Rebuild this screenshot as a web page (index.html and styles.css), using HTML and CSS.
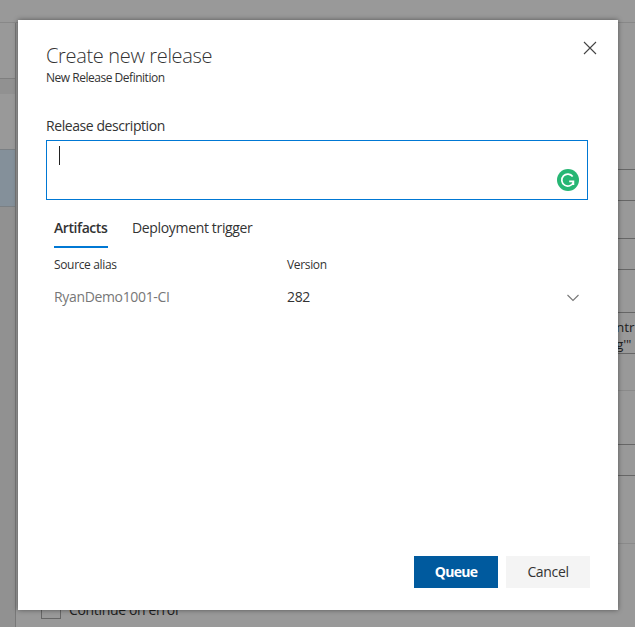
FILE: index.html
```
<!DOCTYPE html>
<html lang="en">
<head>
<meta charset="utf-8">
<title>Create new release</title>
<link rel="stylesheet" href="styles.css">
</head>
<body>
<div class="page">
  <header class="page-bar"></header>
  <div class="page-body">
    <aside class="stages">
      <div class="stage-head"></div>
      <div class="stage-gap"></div>
      <div class="stage-item"></div>
      <div class="stage-item selected"></div>
    </aside>
    <main class="settings">
      <div class="field first"></div>
      <div class="field second"></div>
      <div class="field script"><span>ntr</span><span>g'"</span></div>
      <div class="divider"></div>
      <div class="field third"></div>
      <div class="divider last"></div>
      <div class="check-row"><span class="checkbox"></span><span class="check-label">Continue on error</span></div>
    </main>
  </div>
</div>
<section class="dialog" role="dialog">
  <header class="dialog-header">
    <div>
      <h1 class="title">Create new release</h1>
      <p class="subtitle">New Release Definition</p>
    </div>
    <svg class="close" width="14" height="14" viewBox="0 0 14 14"><path d="M1 1L13 13M13 1L1 13" fill="none" stroke="#444" stroke-width="1.1"/></svg>
  </header>
  <div class="label">Release description</div>
  <div class="description">
    <span class="caret"></span>
    <svg class="badge" width="22" height="22" viewBox="0 0 22 22"><circle cx="11" cy="11" r="11" fill="#27b674"/><path d="M15.7 7.6A6 6 0 1 0 16.4 13.2M12.2 12.3H16.4V16" fill="none" stroke="#fff" stroke-width="1.7"/></svg>
  </div>
  <nav class="tabs">
    <div class="tab active">Artifacts</div>
    <div class="tab">Deployment trigger</div>
  </nav>
  <div class="grid heads"><span>Source alias</span><span>Version</span></div>
  <div class="grid values">
    <span class="alias">RyanDemo1001-CI</span><span>282</span>
    <svg class="chevron" width="12" height="8" viewBox="0 0 12 8"><path d="M.5 1L6 6.5L11.5 1" fill="none" stroke="#777" stroke-width="1.1"/></svg>
  </div>
  <footer class="actions">
    <button class="btn primary">Queue</button>
    <button class="btn">Cancel</button>
  </footer>
</section>
</body>
</html>
```
FILE: styles.css
```
* { box-sizing: border-box; }
body {
  margin: 0;
  width: 635px;
  height: 627px;
  overflow: hidden;
  background: #999;
  color: #333;
  font: 14px/20px "Open Sans", "Noto Sans", sans-serif;
  letter-spacing: -.34px;
}
h1, p { margin: 0; }
.page { height: 627px; display: flex; flex-direction: column; }
.page-bar { height: 23px; border-bottom: 1px solid #888; }
.page-body { flex: 1; display: flex; min-height: 0; }
.stages { width: 16px; background: #919191; border-right: 1px solid #787878; }
.stage-head { height: 56px; background: #999; border-bottom: 1px solid #7f7f7f; }
.stage-gap { height: 15px; }
.stage-item { height: 55px; background: #999; }
.stage-item.selected { height: 58px; background: #84909a; border: solid #7b8084; border-width: 1px 0; }
.settings { flex: 1; min-width: 0; padding: 146px 0 0 25px; }
.field { height: 32px; border: solid #666; border-width: 1px 0; }
.second { margin-top: 37px; }
.script {
  height: 42px;
  margin-top: 42px;
  padding: 6px 0 0 575px;
  display: flex;
  flex-direction: column;
  line-height: 17px;
  font-size: 13.5px;
  letter-spacing: -.1px;
  color: #1f1f1f;
  white-space: nowrap;
}
.divider { height: 1px; margin-top: 36px; background: #8a8a8a; }
.third { margin-top: 53px; }
.last { margin-top: 67px; }
.check-row { display: flex; margin-top: 55px; }
.checkbox { width: 20px; height: 20px; border: 1px solid #666; }
.check-label { margin-left: 8px; line-height: 22px; color: #1f1f1f; }
.dialog {
  position: absolute;
  left: 18px;
  top: 20px;
  width: 600px;
  height: 590px;
  padding: 22px 28px;
  background: #fff;
  box-shadow: 0 0 5px rgba(0, 0, 0, .45);
  display: flex;
  flex-direction: column;
}
.dialog-header { display: flex; justify-content: space-between; height: 74px; }
.title { font-size: 20px; line-height: 28px; font-weight: 300; }
.subtitle { font-size: 12px; line-height: 16px; letter-spacing: -.48px; }
.close { margin: -1px -7px 0 0; flex: none; }
.label { height: 24px; line-height: 20px; letter-spacing: -.43px; }
.description {
  flex: none;
  height: 60px;
  width: 542px;
  border: 1px solid #0078d4;
  padding: 5px 8px 8px 12px;
  display: flex;
  justify-content: space-between;
}
.caret { width: 1px; height: 19px; background: #222; }
.badge { align-self: flex-end; }
.tabs { display: flex; gap: 24px; padding: 16px 0 0 8px; height: 48px; }
.tab { height: 32px; line-height: 24px; }
.active { width: 54px; border-bottom: 2px solid #0078d4; font-weight: 600; letter-spacing: -.43px; }
.grid { display: grid; grid-template-columns: 233px 280px 12px; padding-left: 8px; align-items: center; }
.heads { height: 34px; font-size: 12px; }
.values { height: 30px; }
.chevron { margin-top: 2px; }
.alias { color: #777; }
.actions { margin-top: auto; display: flex; justify-content: flex-end; gap: 8px; }
.btn { width: 84px; height: 32px; border: 0; padding: 0; background: #f4f4f4; color: #333; font: 14px/32px "Open Sans", sans-serif; letter-spacing: -.34px; }
.primary { background: #005a9e; color: #fff; font-weight: 700; letter-spacing: -.7px; }
.tab, .label, .title, .subtitle, .grid { white-space: nowrap; }
```
